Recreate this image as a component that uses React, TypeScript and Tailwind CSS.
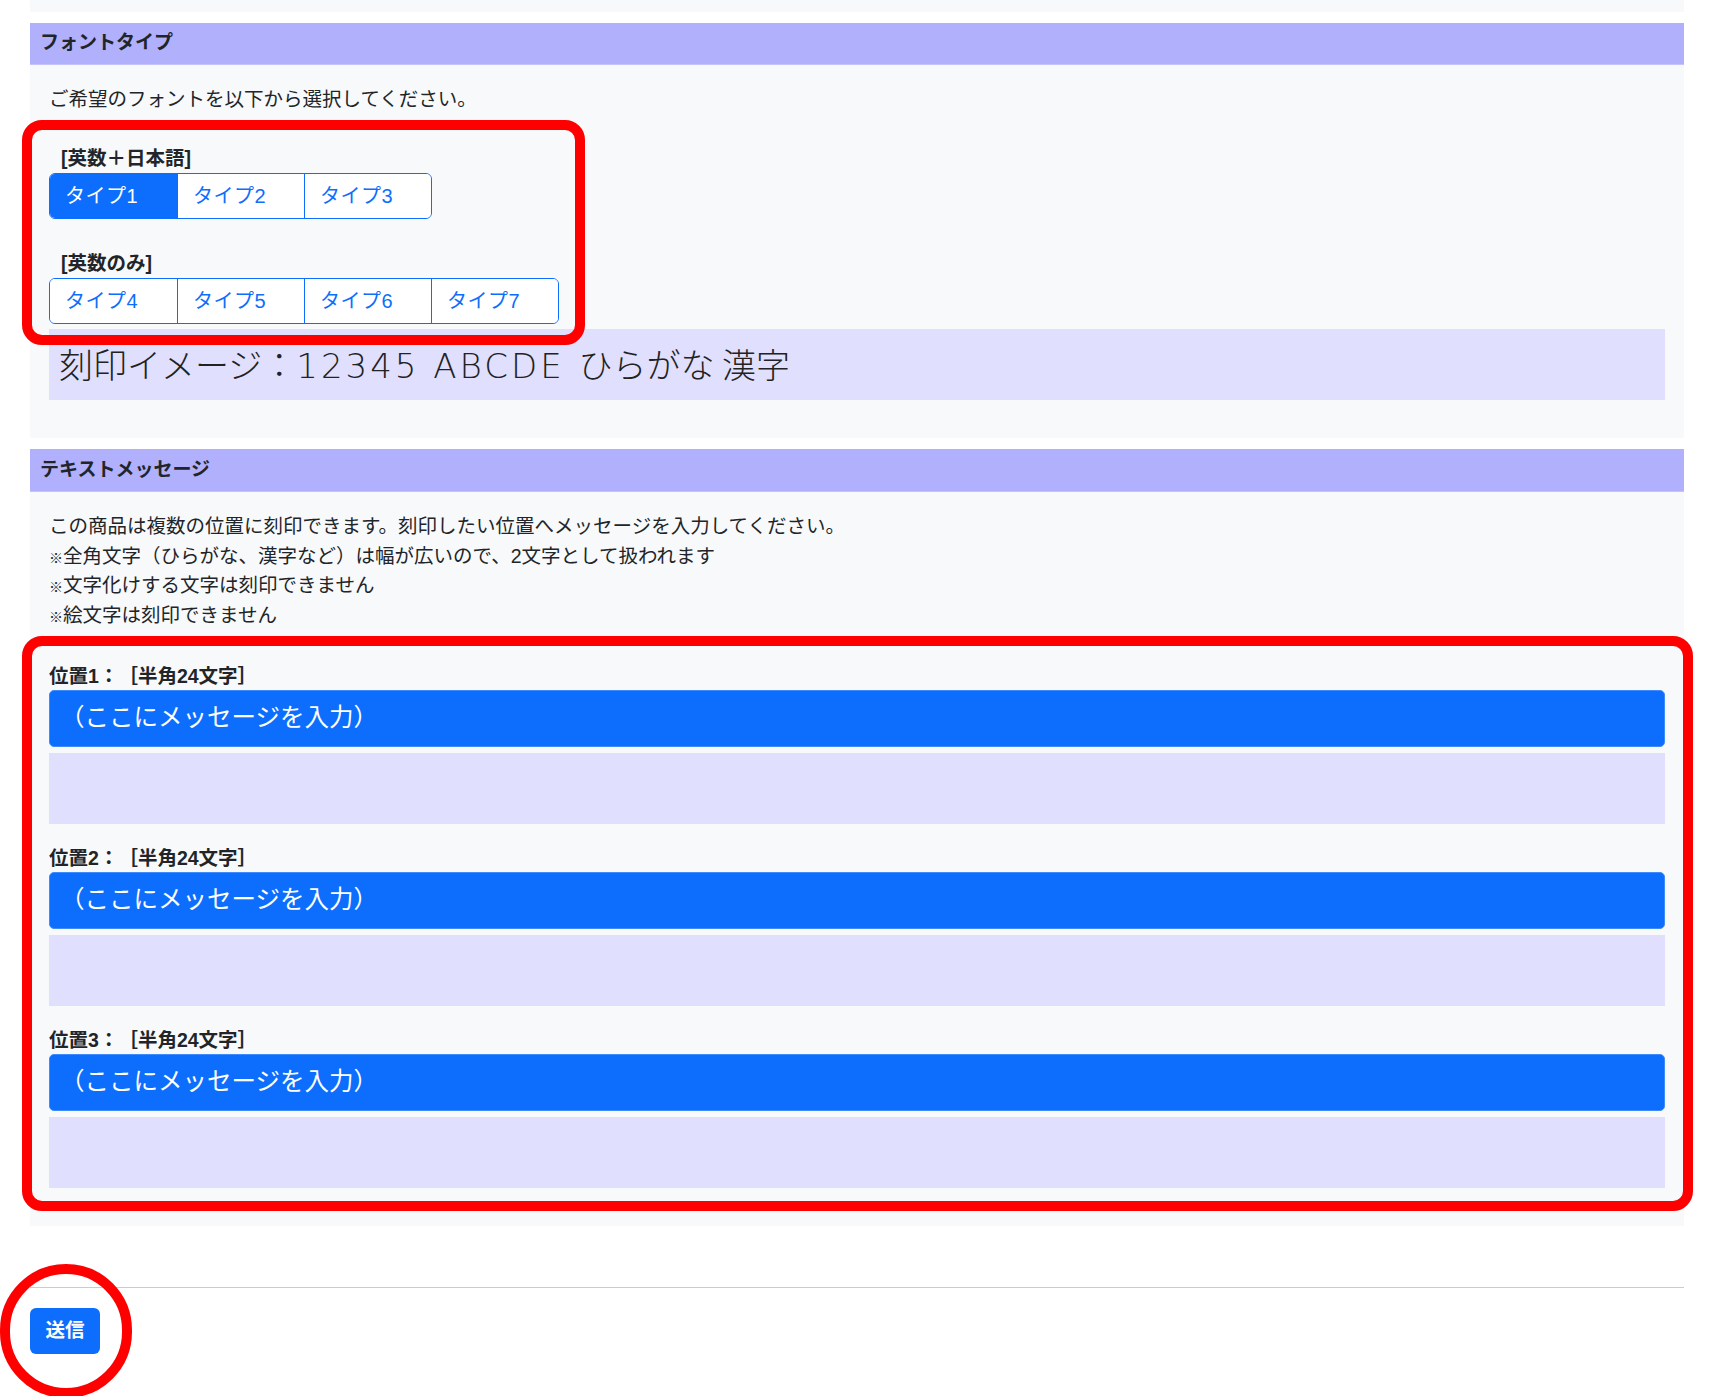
import React from "react";

function ButtonGroup({ items, active }: { items: string[]; active: number }) {
  return (
    <div className="flex w-fit overflow-hidden rounded-[6px] border border-[#0d6efd]">
      {items.map((t, i) => (
        <div
          key={t}
          className={
            "flex h-[44px] w-[127px] items-center pl-[15px] text-[20px] tracking-[0.5px] " +
            (i > 0 ? "border-l border-[#0d6efd] " : "") +
            (i === active ? "bg-[#0d6efd] text-white" : "bg-white text-[#0d6efd]")
          }
        >
          {t}
        </div>
      ))}
    </div>
  );
}

function Position({ n, first }: { n: number; first?: boolean }) {
  return (
    <div className={first ? "mt-[32px]" : "mt-[20px]"}>
      <div className="font-bold leading-[28px]">位置{n}：［半角24文字］</div>
      <div className="flex h-[57px] items-center rounded-[5px] border border-[#3d8bfd] bg-[#0d6efd] px-[10px] text-[24.5px] text-white">
        （ここにメッセージを入力）
      </div>
      <div className="mt-[6px] h-[71px] bg-[#e0dffd]" />
    </div>
  );
}

export default function App() {
  return (
    <div className="relative min-h-[1396px] bg-white font-['Liberation_Sans','Noto_Sans_CJK_JP',sans-serif] text-[19.5px] leading-[1.5] text-[#212529] [text-spacing-trim:space-all]">
      <div className="ml-[30px] w-[1654px]">
        <div className="h-[12px] bg-[#f8f9fa]" />

        <section className="mt-[11px]">
          <div className="flex h-[42px] items-center border-b border-[#c4c4fb] bg-[#b0b0fd] px-[10px] text-[19px] font-bold">
            フォントタイプ
          </div>
          <div className="bg-[#f8f9fa] px-[19px] pb-[38px] pt-[20px]">
            <p className="leading-[29px]">ご希望のフォントを以下から選択してください。</p>
            <div className="ml-[12px] mt-[30px] font-bold leading-[29px]">[英数＋日本語]</div>
            <ButtonGroup items={["タイプ1", "タイプ2", "タイプ3"]} active={0} />
            <div className="ml-[12px] mt-[30px] font-bold leading-[29px]">[英数のみ]</div>
            <ButtonGroup items={["タイプ4", "タイプ5", "タイプ6", "タイプ7"]} active={-1} />
            <div className="mt-[5px] flex h-[71px] items-center bg-[#e0dffd] px-[10px] font-['Noto_Sans_CJK_JP',sans-serif] text-[34px] font-light text-[#222]">
              <span className="whitespace-pre">
                刻印イメージ：<span className="font-['DejaVu_Sans',sans-serif] font-extralight tracking-[3px]">12345 ABCDE </span>ひらがな 漢字
              </span>
            </div>
          </div>
        </section>

        <section className="mt-[11px]">
          <div className="flex h-[43px] items-center border-b border-[#c4c4fb] bg-[#b0b0fd] px-[10px] text-[19px] font-bold">
            テキストメッセージ
          </div>
          <div className="bg-[#f8f9fa] px-[19px] pb-[38px] pt-[20px]">
            <div className="leading-[29.5px]">
              <p>この商品は複数の位置に刻印できます。刻印したい位置へメッセージを入力してください。</p>
              <p>
                <span className="text-[14px] leading-[0]">※</span>全角文字（ひらがな、漢字など）は幅が広いので、2文字として扱われます
              </p>
              <p>
                <span className="text-[14px] leading-[0]">※</span>文字化けする文字は刻印できません
              </p>
              <p>
                <span className="text-[14px] leading-[0]">※</span>絵文字は刻印できません
              </p>
            </div>
            <Position n={1} first />
            <Position n={2} />
            <Position n={3} />
          </div>
        </section>

        <div className="mt-[61px] border-t border-[#cccccc]" />
        <button className="mt-[20px] flex h-[46px] w-[70px] items-center justify-center rounded-[6px] bg-[#0d6efd] font-bold text-white">
          送信
        </button>
      </div>

      <div className="absolute left-[22px] top-[120px] h-[225px] w-[563px] rounded-[20px] border-[10px] border-[#ff0000]" />
      <div className="absolute left-[22px] top-[636px] h-[575px] w-[1671px] rounded-[20px] border-[10px] border-[#ff0000]" />
      <div className="absolute left-0 top-[1264px] h-[134px] w-[132px] rounded-full border-[10px] border-[#ff0000]" />
    </div>
  );
}
